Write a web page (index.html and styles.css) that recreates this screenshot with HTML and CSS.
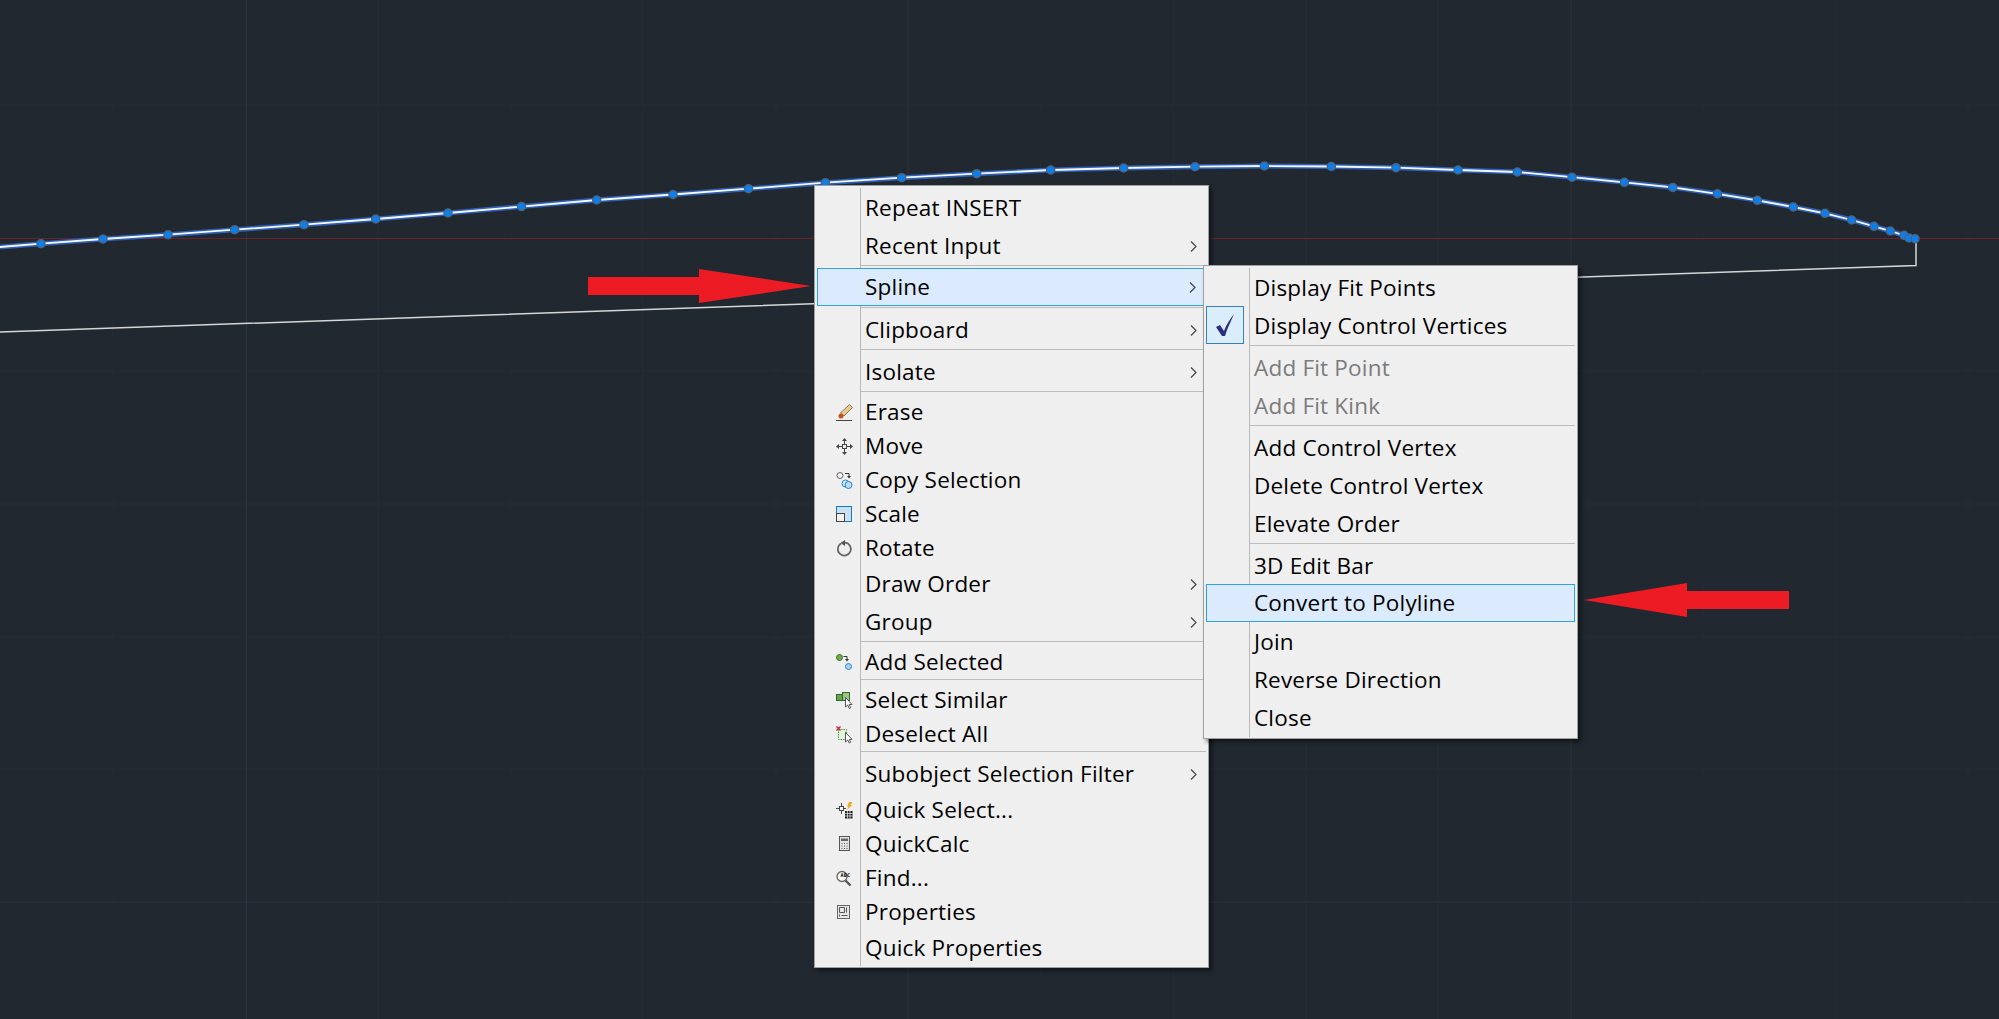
FILE: index.html
```html
<!DOCTYPE html>
<html lang="en">
<head>
    <meta charset="UTF-8">
    <meta name="viewport" content="width=device-width, initial-scale=1.0">
    <title>Spline context menu</title>
    <link rel="stylesheet" href="styles.css">
</head>
<body>
    <svg class="drawing" width="1999" height="1019" viewBox="0 0 1999 1019">
        <g class="grid">
            <path d="M113 0V1019M378 0V1019M511 0V1019M643 0V1019M776 0V1019M1041 0V1019M1173 0V1019M1306 0V1019M1438 0V1019M1703 0V1019M1836 0V1019M1968 0V1019"/>
            <path d="M0 105H1999M0 371H1999M0 504H1999M0 637H1999M0 769H1999"/>
        </g>
        <g class="grid-major">
            <path d="M246.500 0V1019M908 0V1019M1571 0V1019M0 902H1999"/>
        </g>
        <path class="axis" d="M0 238.500H1999"/>
        <path class="outline" d="M0 332L1916 265.500V238"/>
        <g class="spline">
            <polyline class="halo" points="0,247 41,243.700 103,239 168,234.700 234.700,229.700 304,224.700 375.700,219 448,213 521.500,206.600 596.700,200 673,194.500 748.500,188.700 825.300,182.700 901.700,177.700 976.700,173.700 1050.700,170 1123.700,168 1195,166.700 1264.300,166 1331.300,166.500 1396,167.700 1458,170 1517.300,172 1572,177.200 1624.400,182.300 1672.800,187.400 1717.400,193.800 1757.300,200.300 1793.300,207 1825,213.300 1851.700,220 1874,226.300 1890.300,231 1904,235.300 1915,238.700"/>
            <polyline class="core" points="0,247 41,243.700 103,239 168,234.700 234.700,229.700 304,224.700 375.700,219 448,213 521.500,206.600 596.700,200 673,194.500 748.500,188.700 825.300,182.700 901.700,177.700 976.700,173.700 1050.700,170 1123.700,168 1195,166.700 1264.300,166 1331.300,166.500 1396,167.700 1458,170 1517.300,172 1572,177.200 1624.400,182.300 1672.800,187.400 1717.400,193.800 1757.300,200.300 1793.300,207 1825,213.300 1851.700,220 1874,226.300 1890.300,231 1904,235.300 1915,238.700"/>
        </g>
        <g class="vertices">
            <circle cx="41" cy="243.700"/><circle cx="103" cy="239"/><circle cx="168" cy="234.700"/><circle cx="234.700" cy="229.700"/>
            <circle cx="304" cy="224.700"/><circle cx="375.700" cy="219"/><circle cx="448" cy="213"/><circle cx="521.500" cy="206.600"/>
            <circle cx="596.700" cy="200"/><circle cx="673" cy="194.500"/><circle cx="748.500" cy="188.700"/><circle cx="825.300" cy="182.700"/>
            <circle cx="901.700" cy="177.700"/><circle cx="976.700" cy="173.700"/><circle cx="1050.700" cy="170"/><circle cx="1123.700" cy="168"/>
            <circle cx="1195" cy="166.700"/><circle cx="1264.300" cy="166"/><circle cx="1331.300" cy="166.500"/><circle cx="1396" cy="167.700"/>
            <circle cx="1458" cy="170"/><circle cx="1517.300" cy="172"/><circle cx="1572" cy="177.200"/><circle cx="1624.400" cy="182.300"/>
            <circle cx="1672.800" cy="187.400"/><circle cx="1717.400" cy="193.800"/><circle cx="1757.300" cy="200.300"/><circle cx="1793.300" cy="207"/>
            <circle cx="1825" cy="213.300"/><circle cx="1851.700" cy="220"/><circle cx="1874" cy="226.300"/><circle cx="1890.300" cy="231"/>
            <circle cx="1904" cy="235.300"/><circle cx="1909" cy="238"/><circle cx="1915" cy="238.700"/>
        </g>
    </svg>

    <div class="menu menu-main">
        <div class="item"><span class="ico"></span><span class="label">Repeat INSERT</span></div>
        <div class="item"><span class="ico"></span><span class="label">Recent Input</span><svg class="chev" viewBox="0 0 7 11"><path d="M1 .5L6 5.500 1 10.500"/></svg></div>
        <div class="sep"></div>
        <div class="item hot hot-spline"><span class="ico"></span><span class="label">Spline</span><svg class="chev" viewBox="0 0 7 11"><path d="M1 .5L6 5.500 1 10.500"/></svg></div>
        <div class="sep"></div>
        <div class="item"><span class="ico"></span><span class="label">Clipboard</span><svg class="chev" viewBox="0 0 7 11"><path d="M1 .5L6 5.500 1 10.500"/></svg></div>
        <div class="sep"></div>
        <div class="item"><span class="ico"></span><span class="label">Isolate</span><svg class="chev" viewBox="0 0 7 11"><path d="M1 .5L6 5.500 1 10.500"/></svg></div>
        <div class="sep"></div>
        <div class="item short"><span class="ico">
            <svg viewBox="0 0 17 17"><path d="M0 16.500h16" stroke="#444"/><path d="M13.500 .5L16.500 3.500 8 12 4.500 9z" fill="#e9c88f" stroke="#8a7a60"/><circle cx="5" cy="12" r="2.500" fill="#c8501a"/></svg>
        </span><span class="label">Erase</span></div>
        <div class="item short"><span class="ico">
            <svg viewBox="0 0 17 17"><rect x="6.500" y="6.500" width="4" height="4" fill="none" stroke="#444"/><path d="M8.500 0L11 3H6zM8.500 17L6 14h5zM0 8.500L3 6v5zM17 8.500L14 11V6z" fill="#444"/><path d="M8.500 3v3M8.500 11v3M3 8.500h3M11 8.500h3" stroke="#444"/></svg>
        </span><span class="label">Move</span></div>
        <div class="item short"><span class="ico">
            <svg viewBox="0 0 17 17"><circle cx="4" cy="3.500" r="3" fill="#f4f4f4" stroke="#666"/><path d="M9 1.500h4v3" fill="none" stroke="#333"/><path d="M11 4h4l-2 2.500z" fill="#333"/><circle cx="9.500" cy="11.500" r="3.500" fill="#d8e9f8" stroke="#2a86d0"/><circle cx="12.500" cy="13" r="3.500" fill="#bcdcf5" stroke="#2a86d0"/></svg>
        </span><span class="label">Copy Selection</span></div>
        <div class="item short"><span class="ico">
            <svg viewBox="0 0 17 17"><rect x=".5" y=".5" width="15" height="15" fill="#c9dff2" stroke="#1a78c8"/><rect x=".5" y="7.500" width="8" height="8" fill="#f0f0f0" stroke="#444"/></svg>
        </span><span class="label">Scale</span></div>
        <div class="item short"><span class="ico">
            <svg viewBox="0 0 17 17"><path d="M5 3.500A6.500 6.500 0 1 0 9 2.600" fill="none" stroke="#666" stroke-width="1.700"/><path d="M9 0v6L4.500 3z" fill="#555"/></svg>
        </span><span class="label">Rotate</span></div>
        <div class="item"><span class="ico"></span><span class="label">Draw Order</span><svg class="chev" viewBox="0 0 7 11"><path d="M1 .5L6 5.500 1 10.500"/></svg></div>
        <div class="item"><span class="ico"></span><span class="label">Group</span><svg class="chev" viewBox="0 0 7 11"><path d="M1 .5L6 5.500 1 10.500"/></svg></div>
        <div class="sep"></div>
        <div class="item short"><span class="ico">
            <svg viewBox="0 0 17 17"><circle cx="3.500" cy="3.500" r="3" fill="#6fa84f" stroke="#3d7a2c"/><path d="M7.500 2.500h3.500v3" fill="none" stroke="#333"/><path d="M9 5h4l-2 2.500z" fill="#333"/><circle cx="12.500" cy="12.500" r="3" fill="#a5d3f5" stroke="#2a86d0"/></svg>
        </span><span class="label">Add Selected</span></div>
        <div class="sep"></div>
        <div class="item short"><span class="ico">
            <svg viewBox="0 0 17 17"><rect x=".5" y="2.500" width="6" height="6" fill="#6c9f52" stroke="#2f6b25"/><rect x="6.500" y=".5" width="7" height="8" fill="#9cc487" stroke="#2f6b25"/><path d="M9.500 5.500V15l2.200-2 1.500 3.500 1.500-.7-1.500-3.300H16z" fill="#fff" stroke="#444" stroke-width=".9"/></svg>
        </span><span class="label">Select Similar</span></div>
        <div class="item short"><span class="ico">
            <svg viewBox="0 0 17 17"><rect x="2.500" y="3.500" width="8" height="10" fill="#e6f3dc" stroke="#3aa635" stroke-dasharray="1.500 1"/><path d="M.5.500l4 4M4.500.5l-4 4" stroke="#c8202c" stroke-width="1.300"/><path d="M9.500 6.500V16l2.200-2 1.500 3 1.500-.7-1.500-3H16z" fill="#fff" stroke="#444" stroke-width=".9"/></svg>
        </span><span class="label">Deselect All</span></div>
        <div class="sep"></div>
        <div class="item"><span class="ico"></span><span class="label">Subobject Selection Filter</span><svg class="chev" viewBox="0 0 7 11"><path d="M1 .5L6 5.500 1 10.500"/></svg></div>
        <div class="item short"><span class="ico">
            <svg viewBox="0 0 17 17"><rect x="3.500" y="4.500" width="4" height="4" fill="none" stroke="#444"/><path d="M5.500 1v3.500M5.500 8.500V12M0 6.500h3.500M7.500 6.500H10" stroke="#444"/><path d="M13 0h3.500l-2 3H16l-5 5 1.500-3.500H11z" fill="#f0a820"/><rect x="9" y="9" width="7.500" height="7.500" fill="#222"/><path d="M9 11.500h7.500M9 14h7.500M11.500 9v7.500M14 9v7.500" stroke="#eee" stroke-width=".7"/></svg>
        </span><span class="label">Quick Select...</span></div>
        <div class="item short"><span class="ico">
            <svg viewBox="0 0 17 17"><rect x="3.500" y=".5" width="10" height="14" fill="#e4e4e4" stroke="#555"/><rect x="5" y="2.500" width="7" height="2.500" fill="#666"/><path d="M5.500 7.500h1M8 7.500h1M10.500 7.500h1M5.500 10h1M8 10h1M10.500 10h1M5.500 12.500h1M8 12.500h1M10.500 12.500h1" stroke="#555"/></svg>
        </span><span class="label">QuickCalc</span></div>
        <div class="item short"><span class="ico">
            <svg viewBox="0 0 17 17"><circle cx="6" cy="6.500" r="5" fill="#f6f6f6" stroke="#666" stroke-width="1.300"/><path d="M9.500 10.500l5 5" stroke="#555" stroke-width="2.400"/><text class="ico-text" x="4.500" y="6.500">ABC</text></svg>
        </span><span class="label">Find...</span></div>
        <div class="item short"><span class="ico">
            <svg viewBox="0 0 17 17"><rect x="1.500" y="1.500" width="12" height="13" fill="#e6e6e6" stroke="#666"/><path d="M3.500 3.500h5v5h-5zM10.500 3.500v5M5.500 11.500h6M3.500 10.500v2" fill="none" stroke="#555"/></svg>
        </span><span class="label">Properties</span></div>
        <div class="item"><span class="ico"></span><span class="label">Quick Properties</span></div>
    </div>

    <div class="menu menu-sub">
        <div class="item"><span class="ico"></span><span class="label">Display Fit Points</span></div>
        <div class="item"><span class="ico"><span class="check"><svg viewBox="0 0 20 24"><path d="M1 14L5 12 9 18C11 12 15 6 19 1 16 8 12 16 10 23H7z"/></svg></span></span><span class="label">Display Control Vertices</span></div>
        <div class="sep"></div>
        <div class="item off"><span class="ico"></span><span class="label">Add Fit Point</span></div>
        <div class="item off"><span class="ico"></span><span class="label">Add Fit Kink</span></div>
        <div class="sep"></div>
        <div class="item"><span class="ico"></span><span class="label">Add Control Vertex</span></div>
        <div class="item"><span class="ico"></span><span class="label">Delete Control Vertex</span></div>
        <div class="item"><span class="ico"></span><span class="label">Elevate Order</span></div>
        <div class="sep"></div>
        <div class="item"><span class="ico"></span><span class="label">3D Edit Bar</span></div>
        <div class="item hot hot-convert"><span class="ico"></span><span class="label">Convert to Polyline</span></div>
        <div class="item"><span class="ico"></span><span class="label">Join</span></div>
        <div class="item"><span class="ico"></span><span class="label">Reverse Direction</span></div>
        <div class="item"><span class="ico"></span><span class="label">Close</span></div>
    </div>

    <svg class="pointers" width="1999" height="1019" viewBox="0 0 1999 1019">
        <path d="M588 277H699V269L811 286 699 303V295H588z"/>
        <path d="M1789 591H1687V583L1584 600 1687 617V609H1789z"/>
    </svg>
</body>
</html>
```

FILE: styles.css
```css
body {
    margin: 0;
    width: 1999px;
    height: 1019px;
    overflow: hidden;
    position: relative;
    background-color: #212830;
    font-family: "Open Sans", "Noto Sans", sans-serif;
}
.drawing, .pointers {
    position: absolute;
    left: 0;
    top: 0;
}
.grid path {
    stroke: #262d37;
    stroke-width: 1;
    fill: none;
}
.grid-major path {
    stroke: #2c3340;
    stroke-width: 1;
    fill: none;
}
.axis {
    stroke: #6e2027;
    fill: none;
}
.outline {
    stroke: #d6d6d6;
    stroke-width: 1.5;
    fill: none;
}
.spline polyline {
    fill: none;
}
.halo {
    stroke: #2f5fb0;
    stroke-width: 5;
}
.core {
    stroke: #f4f8ff;
    stroke-width: 1.8;
}
.vertices circle {
    r: 4px;
    fill: #0a80f0;
    stroke: #4a6480;
    stroke-width: 1.5;
}
.pointers path {
    fill: #ed1c24;
}

.menu {
    position: absolute;
    box-sizing: border-box;
    display: flex;
    flex-direction: column;
    background-color: #efefef;
    border: 1px solid #a0a0a0;
    padding: 3px 2px 0;
    box-shadow: 3px 3px 4px rgba(0, 0, 0, 0.45);
}
.menu::before {
    content: "";
    position: absolute;
    top: 2px;
    bottom: 1px;
    left: 45px;
    width: 1px;
    background-color: #b8b8b8;
}
.menu-main {
    left: 814px;
    top: 185px;
    width: 395px;
    height: 783px;
}
.menu-sub {
    left: 1203px;
    top: 265px;
    width: 375px;
    height: 474px;
}
.item {
    position: relative;
    display: flex;
    align-items: center;
    flex: none;
    box-sizing: border-box;
    height: 38px;
    font-size: 22.500px;
    letter-spacing: 0.2px;
    color: #000;
}
.item.short {
    height: 34px;
}
.off {
    color: #7b7b7b;
}
.hot {
    background-color: #dbeafd;
    border: 1px solid #2fa3e0;
    margin-left: 0;
}
.hot-spline {
    margin-top: -1px;
    margin-bottom: 1px;
}
.hot-convert {
    margin-top: -1px;
    margin-bottom: 1px;
}
.ico {
    flex: none;
    box-sizing: border-box;
    width: 44px;
    display: flex;
    align-items: center;
    padding-left: 19px;
}
.ico svg {
    display: block;
    width: 17px;
    height: 17px;
    overflow: visible;
}
.ico-text {
    font-family: "DejaVu Sans Mono", monospace;
    font-size: 5px;
    font-weight: bold;
}
.hot .ico {
    width: 43px;
    padding-left: 18px;
}
.check {
    flex: none;
    box-sizing: border-box;
    display: flex;
    align-items: center;
    justify-content: center;
    width: 38px;
    height: 38px;
    margin: 0 0 2px -19px;
    background-color: #d9edfb;
    border: 1px solid #3a7fb8;
}
.ico .check svg {
    width: 20px;
    height: 24px;
}
.check path {
    fill: #2e2e80;
}
.label {
    flex: 1;
    padding: 0 0 2px 4px;
    white-space: nowrap;
}
.chev {
    flex: none;
    width: 7px;
    height: 11px;
    margin-right: 9px;
}
.chev path {
    fill: none;
    stroke: #444;
    stroke-width: 1.2;
}
.sep {
    flex: none;
    height: 1px;
    margin: 0 0 3px 44px;
    background-color: #bcbcbc;
}
```
